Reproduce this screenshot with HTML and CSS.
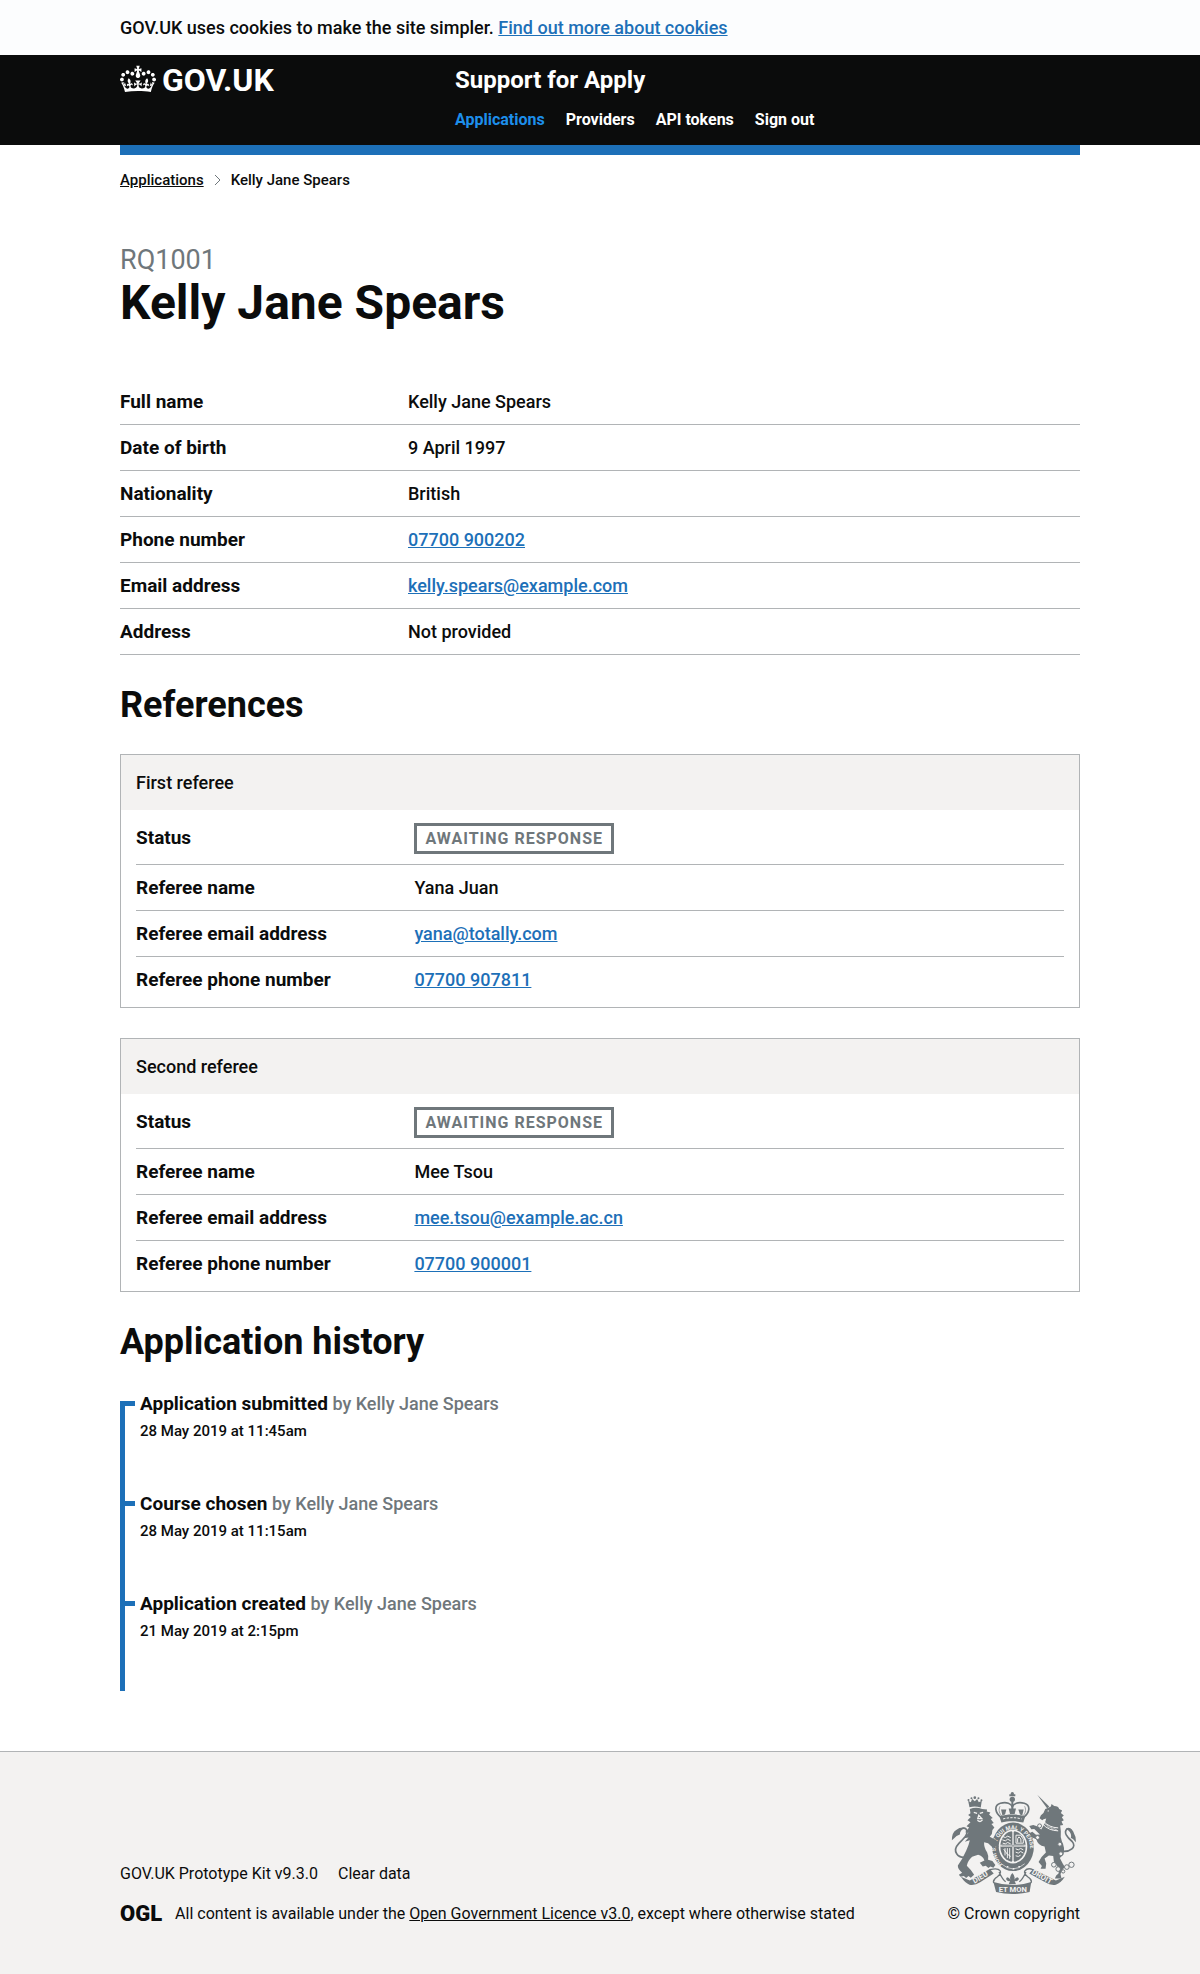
FILE: index.html
```html
<!DOCTYPE html>
<html lang="en">
<head>
<meta charset="utf-8">
<title>Kelly Jane Spears</title>
<meta name="viewport" content="width=device-width, initial-scale=1">
<link rel="stylesheet" href="styles.css">
</head>
<body>
<div class="cookie-banner"><p class="container">GOV.UK uses cookies to make the site simpler. <a class="link" href="#">Find out more about cookies</a></p></div>
<header class="header">
  <div class="container header-inner">
    <a class="logo" href="#">
      <svg class="crown" viewBox="0 0 132 97" aria-hidden="true"><path fill="currentColor" d="M25 30.2c3.5 1.5 7.7-.2 9.1-3.7 1.5-3.6-.2-7.8-3.9-9.2-3.6-1.4-7.6.3-9.1 3.9-1.4 3.5.3 7.5 3.9 9zM9 39.5c3.6 1.5 7.8-.2 9.2-3.7 1.5-3.6-.2-7.8-3.9-9.1-3.6-1.5-7.6.2-9.1 3.8-1.4 3.5.3 7.5 3.8 9zM4.4 57.2c3.5 1.5 7.7-.2 9.1-3.8 1.5-3.6-.2-7.7-3.9-9.1-3.5-1.5-7.6.3-9.1 3.8-1.4 3.5.3 7.6 3.9 9.1zm38.3-21.4c3.5 1.5 7.7-.2 9.1-3.8 1.5-3.6-.2-7.7-3.9-9.1-3.6-1.5-7.6.3-9.1 3.8-1.3 3.6.4 7.7 3.9 9.1zm64.4-5.6c-3.6 1.5-7.8-.2-9.1-3.7-1.5-3.6.2-7.8 3.8-9.2 3.6-1.4 7.7.3 9.2 3.9 1.3 3.5-.4 7.5-3.9 9zm15.9 9.3c-3.6 1.5-7.7-.2-9.1-3.7-1.5-3.6.2-7.8 3.7-9.1 3.6-1.5 7.7.2 9.2 3.8 1.5 3.5-.3 7.5-3.8 9zm4.7 17.7c-3.6 1.5-7.8-.2-9.2-3.8-1.5-3.6.2-7.7 3.9-9.1 3.6-1.5 7.7.3 9.2 3.8 1.3 3.5-.4 7.6-3.9 9.1zM89.3 35.8c-3.6 1.5-7.8-.2-9.2-3.8-1.4-3.6.2-7.7 3.9-9.1 3.6-1.5 7.7.3 9.2 3.8 1.4 3.6-.3 7.7-3.9 9.1zM69.7 17.7l8.9 4.7V9.3l-8.9 2.8c-.2-.3-.5-.6-.9-.9L72.4 0H59.6l3.5 11.2c-.3.3-.6.5-.9.9l-8.8-2.8v13.1l8.8-4.7c.3.3.6.7.9.9l-5 15.4v.1c-.2.8-.4 1.6-.4 2.4 0 4.1 3.1 7.5 7 8.1h.2c.3 0 .7.1 1 .1.4 0 .7 0 1-.1h.2c4-.6 7.1-4.1 7.1-8.1 0-.8-.1-1.7-.4-2.4V34l-5.1-15.4c.4-.2.7-.6 1-.9zM66 92.8c16.9 0 32.8 1.1 47.1 3.2 4-16.9 8.9-26.7 14-33.5l-9.6-3.4c1 4.9 1.1 7.2 0 10.2-1.5-1.4-3-4.3-4.2-8.7L108.6 76c2.8-2 5-3.2 7.5-3.3-4.4 9.4-10 11.9-13.6 11.2-4.3-.8-6.3-4.6-5.6-7.9 1-4.7 5.7-5.9 8-.5 4.3-8.7-3-11.4-7.6-8.8 7.1-7.2 7.9-13.5 2.1-21.1-8 6.1-8.1 12.3-4.5 20.8-4.7-5.4-12.1-2.5-9.5 6.2 3.4-5.2 7.9-2 7.2 3.1-.6 4.3-6.4 7.8-13.5 7.2-10.3-.9-10.9-8-11.2-13.8 2.5-.5 7.1 1.8 11 7.3L80.2 60c-4.1 4.4-8 5.3-12.3 5.4 1.4-4.4 8-11.6 8-11.6H55.5s6.4 7.2 7.9 11.6c-4.2-.1-8-1-12.3-5.4l1.4 16.4c3.9-5.5 8.5-7.7 10.9-7.3-.3 5.8-.9 12.8-11.1 13.8-7.2.6-12.9-2.9-13.5-7.2-.7-5 3.8-8.3 7.1-3.1 2.7-8.7-4.6-11.6-9.4-6.2 3.7-8.5 3.6-14.7-4.6-20.8-5.8 7.6-5 13.9 2.2 21.1-4.7-2.6-11.9.1-7.7 8.8 2.3-5.5 7.1-4.2 8.1.5.7 3.3-1.3 7.1-5.7 7.9-3.5.7-9-1.8-13.5-11.2 2.5.1 4.7 1.3 7.5 3.3l-4.7-15.4c-1.2 4.4-2.7 7.2-4.3 8.7-1.1-3-.9-5.3 0-10.2l-9.5 3.4c5 6.9 9.9 16.7 14 33.5 14.8-2.1 30.8-3.2 47.7-3.2z"/></svg>
      <span>GOV.UK</span>
    </a>
    <div class="header-content">
      <a class="service" href="#">Support for Apply</a>
      <nav><ul class="nav">
        <li><a class="current" href="#">Applications</a></li>
        <li><a href="#">Providers</a></li>
        <li><a href="#">API tokens</a></li>
        <li><a href="#">Sign out</a></li>
      </ul></nav>
    </div>
  </div>
</header>
<div class="container">
  <nav aria-label="Breadcrumb"><ol class="breadcrumbs">
    <li><a href="#">Applications</a></li>
    <li><svg class="chevron" viewBox="0 0 7 12" aria-hidden="true"><path d="M1 1l5 5-5 5" fill="none" stroke="currentColor"/></svg>Kelly Jane Spears</li>
  </ol></nav>
  <main class="main">
    <p class="caption">RQ1001</p>
    <h1>Kelly Jane Spears</h1>
    <dl class="summary">
      <div><dt>Full name</dt><dd>Kelly Jane Spears</dd></div>
      <div><dt>Date of birth</dt><dd>9 April 1997</dd></div>
      <div><dt>Nationality</dt><dd>British</dd></div>
      <div><dt>Phone number</dt><dd><a class="link" href="#">07700 900202</a></dd></div>
      <div><dt>Email address</dt><dd><a class="link" href="#">kelly.spears@example.com</a></dd></div>
      <div><dt>Address</dt><dd>Not provided</dd></div>
    </dl>
    <h2>References</h2>
    <section class="card">
      <h3>First referee</h3>
      <dl class="summary">
        <div><dt>Status</dt><dd><strong class="tag">Awaiting response</strong></dd></div>
        <div><dt>Referee name</dt><dd>Yana Juan</dd></div>
        <div><dt>Referee email address</dt><dd><a class="link" href="#">yana@totally.com</a></dd></div>
        <div><dt>Referee phone number</dt><dd><a class="link" href="#">07700 907811</a></dd></div>
      </dl>
    </section>
    <section class="card">
      <h3>Second referee</h3>
      <dl class="summary">
        <div><dt>Status</dt><dd><strong class="tag">Awaiting response</strong></dd></div>
        <div><dt>Referee name</dt><dd>Mee Tsou</dd></div>
        <div><dt>Referee email address</dt><dd><a class="link" href="#">mee.tsou@example.ac.cn</a></dd></div>
        <div><dt>Referee phone number</dt><dd><a class="link" href="#">07700 900001</a></dd></div>
      </dl>
    </section>
    <h2>Application history</h2>
    <ol class="timeline">
      <li><p><b>Application submitted</b> <span>by Kelly Jane Spears</span></p><time>28 May 2019 at 11:45am</time></li>
      <li><p><b>Course chosen</b> <span>by Kelly Jane Spears</span></p><time>28 May 2019 at 11:15am</time></li>
      <li><p><b>Application created</b> <span>by Kelly Jane Spears</span></p><time>21 May 2019 at 2:15pm</time></li>
    </ol>
  </main>
</div>
<footer class="footer">
  <div class="container footer-inner">
    <div>
      <ul class="footer-links"><li>GOV.UK Prototype Kit v9.3.0</li><li><a href="#">Clear data</a></li></ul>
      <p class="licence"><span class="ogl">OGL</span><span>All content is available under the <a href="#">Open Government Licence v3.0</a>, except where otherwise stated</span></p>
    </div>
    <a class="copyright" href="#">
      <svg class="crest" viewBox="95 155 375 307" aria-hidden="true">
        <defs>
          <path id="garter" d="M249 373A52 59 0 1 1 313 373"/>
        </defs>
        <!-- royal crown -->
        <g fill="none" stroke="currentColor" stroke-width="5">
          <path d="M246 232C226 217 223 195 243 189C262 184 276 190 279 200C282 190 296 184 315 189C335 195 332 217 312 232"/>
          <path d="M279 177V210M270 165H288" stroke-width="6"/>
          <path d="M242 198C236 210 240 221 251 231M316 198C322 210 318 221 307 231" stroke-width="2"/>
        </g>
        <g fill="currentColor">
          <circle cx="279" cy="160" r="5"/><circle cx="279" cy="177" r="8"/>
          <path d="M240 228C265 221 293 221 318 228L312 247C292 242 266 242 246 247ZM249 225L245 208H261L257 223ZM272 221L268 205H290L286 221ZM302 223L297 208H313L309 225Z"/>
        </g>
        <path d="M251 236C270 231 288 231 307 236" fill="none" stroke="#f3f2f1" stroke-width="3" stroke-dasharray="7 4"/>
        <!-- garter and quartered shield -->
        <ellipse cx="281" cy="320" rx="63" ry="73" fill="currentColor"/>
        <ellipse cx="281" cy="319" rx="43" ry="51" fill="#f3f2f1"/>
        <ellipse cx="281" cy="319" rx="38" ry="46" fill="currentColor"/>
        <path d="M281 272V366M243 317H319" stroke="#f3f2f1" stroke-width="6"/>
        <path d="M281 275V363M246 317H316" stroke="currentColor" stroke-width="2"/>
        <g fill="none" stroke="#f3f2f1" stroke-width="3">
          <path d="M250 289l8 3 7-4 9 4M249 299l9 3 7-5 9 5M250 309l8 2 7-4 9 4M253 327q10 18 21 22M257 324v22M264 324v30M271 324v32M289 326l8 3 7-4 8 4M289 336l8 3 7-5 8 5M289 347l8 2 7-4"/>
          <path d="M290 285h14l8 12v12h-22zM295 307q-2-14 4-17 8 4 6 17"/>
        </g>
        <text class="motto" fill="#f3f2f1"><textPath href="#garter">HONI SOIT QUI MAL Y PENSE</textPath></text>
        <path d="M246 371Q281 402 316 371" fill="none" stroke="#f3f2f1" stroke-width="2"/>
        <path d="M262 380h5M280 386h5M297 380h5" stroke="#f3f2f1" stroke-width="5"/>
        <!-- lion -->
        <g fill="currentColor">
          <path d="M150 201L146 181l8 5 4-10 8 7 7-7 5 10 9-5-3 21q-17-6-34-1Z"/>
          <circle cx="147" cy="179" r="3"/><circle cx="156" cy="174" r="3"/><circle cx="166" cy="172" r="4"/><circle cx="177" cy="174" r="3"/><circle cx="186" cy="180" r="3"/>
          <path d="M151 206Q170 199 188 206L203 208L202 214L213 217L209 223L220 233L214 236L223 248L216 251L225 262L219 269Q220 280 211 290L231 300L239 310L233 313L239 320L228 319L229 326L219 321L206 309L194 306Q193 322 203 336Q209 349 206 359L219 363L228 375L222 383L213 379L207 384L199 377L190 379L181 368L195 361Q190 347 176 344L158 350Q144 363 142 377L154 390L164 404L154 413L147 408L140 414L133 408L123 410L118 404L128 398Q114 386 115 376Q129 357 140 332Q148 315 151 300L136 305L147 292L133 294L147 278L137 276L149 262L141 258L153 246L144 240L154 230L146 224L153 219Z"/>
        </g>
        <path d="M145 350C112 358 98 331 117 311C130 297 150 281 140 267C132 259 119 268 112 280" fill="none" stroke="currentColor" stroke-width="5"/>
        <path d="M97 300Q97 276 110 269Q121 260 136 262Q121 271 121 283Q110 287 104 294Z" fill="currentColor"/>
        <path d="M163 216l10 3M181 219l10-3M178 225l-3 10h12ZM174 240q8 8 15-1" fill="none" stroke="#f3f2f1" stroke-width="4"/>
        <!-- unicorn -->
        <g fill="currentColor">
          <path d="M354 163L390 199L384 205Z"/>
          <path d="M384 204L395 199L397 191L405 197Q418 197 420 206L429 211L425 218L434 226L428 231L434 240L427 244L432 254L423 256L425 273Q423 291 428 303Q438 321 433 343L422 354L431 371L437 381L430 389L424 402L427 415H407L411 406L418 400L420 386L404 364L402 348L389 346L376 355L381 370L379 386H364L368 378L358 366L367 351L380 337L376 319Q356 316 351 297L337 291L330 279L339 275L350 284L362 283L345 266L336 267L330 257L342 254L353 258L366 268L377 248L381 235L373 237L369 240L361 234L365 225Q375 218 378 206Z"/>
        </g>
        <path d="M426 333C453 337 474 320 459 304C443 291 433 277 443 267Q449 262 457 271" fill="none" stroke="currentColor" stroke-width="5"/>
        <path d="M440 265Q460 260 465 281Q471 290 470 306Q462 296 455 293Q460 278 440 265Z" fill="currentColor"/>
        <path d="M374 244Q390 262 417 263M371 252Q387 271 417 272" fill="none" stroke="#f3f2f1" stroke-width="3"/>
        <path d="M376 250l8 5 3 6 9 0 3 6 8-1 8 5" fill="none" stroke="#f3f2f1" stroke-width="2"/>
        <circle cx="387" cy="212" r="2" fill="#f3f2f1"/>
        <g fill="#f3f2f1" stroke="currentColor" stroke-width="3">
          <circle cx="361" cy="257" r="6"/><circle cx="355" cy="292" r="6"/><circle cx="422" cy="312" r="6"/><circle cx="425" cy="341" r="6"/><circle cx="404" cy="374" r="7"/><circle cx="417" cy="387" r="7"/><circle cx="443" cy="381" r="7"/><circle cx="457" cy="374" r="8"/><circle cx="432" cy="394" r="5"/>
        </g>
        <!-- scroll -->
        <g fill="currentColor">
          <path d="M124 410L151 421L211 387L223 400L182 427Q166 437 150 434Q137 429 124 410Z"/>
          <path d="M437 410L410 421L342 387L330 400L378 427Q394 437 410 434Q425 429 437 410Z"/>
          <path d="M222 426Q279 444 336 426L331 456Q279 468 230 456Z"/>
        </g>
        <path d="M211 389Q235 382 242 392Q247 400 234 410Q219 419 223 429M342 389Q325 382 317 392Q312 400 325 410Q340 419 335 429M239 396Q250 420 259 425M320 396Q309 420 300 425" fill="none" stroke="currentColor" stroke-width="4"/>
        <path d="M279 399Q268 411 274 419Q263 405 260 417Q262 425 272 423L268 433H290L286 423Q297 425 299 417Q295 405 284 419Q290 411 279 399Z" fill="currentColor"/>
        <g class="scroll-text" fill="#f3f2f1">
          <text x="238" y="457">ET MON</text>
          <text transform="translate(165 431) rotate(-31)">DIEU</text>
          <text transform="translate(336 400) rotate(30)">DROIT</text>
        </g>
      </svg>
      <span>© Crown copyright</span>
    </a>
  </div>
</footer>
</body>
</html>
```

FILE: styles.css
```css
* { box-sizing: border-box; }
body { margin: 0; background: #fff; color: #0b0c0c; font: 500 18px/25px Roboto, Arial, sans-serif; }
h1, h2, h3, p, ul, ol, dl, dd { margin: 0; padding: 0; }
ul, ol { list-style: none; }
.container { max-width: 960px; margin: 0 auto; }
.link { color: #1d70b8; }
.cookie-banner { padding: 15px 0; background: #fcfdfe; }
.header { display: flow-root; background: #0b0c0c; color: #fff; }
.header a { color: inherit; text-decoration: none; font-weight: 700; }
.header-inner { display: flex; border-bottom: 10px solid #1d70b8; margin-bottom: -10px; padding: 10px 0 15px; }
.logo { display: flex; width: 335px; gap: 6px; font-size: 32px; line-height: 30px; }
.crown { width: 36px; height: 28px; }
.service { display: block; font-size: 24px; line-height: 30px; }
.nav { display: flex; gap: 21px; font-size: 16px; line-height: 20px; margin-top: 15px; }
.header .current { color: #1d8feb; }
.breadcrumbs { display: flex; gap: 10px; padding-top: 25px; font-size: 15px; line-height: 20px; }
.breadcrumbs a { color: inherit; }
.chevron { width: 7px; height: 12px; margin-right: 10px; color: #6f777b; vertical-align: -1px; }
.main { padding: 55px 0 60px; }
.caption { color: #6f777b; font-size: 27px; font-weight: 400; line-height: 30px; }
h1 { font-size: 48px; line-height: 56px; margin-bottom: 48px; }
h2 { font-size: 36px; line-height: 40px; margin: 30px 0 29px; }
.summary > div { display: grid; grid-template-columns: 3fr 7fr; padding: 10px 0; border-bottom: 1px solid #b1b4b6; }
dt, b { font-size: 19px; font-weight: 700; }
.card { border: 1px solid #b1b4b6; margin-bottom: 30px; }
.card h3 { background: #f3f2f1; padding: 15px; font-size: 18px; font-weight: 500; line-height: 25px; }
.card .summary { padding: 5px 15px; }
.card .summary > div:last-child { border: 0; }
.tag { display: block; width: max-content; margin-top: -2px; padding: 3px 8px 2px; border: 3px solid #6f777b; color: #6f777b; font-size: 16px; line-height: 20px; letter-spacing: 1px; text-transform: uppercase; }
.timeline { position: relative; }
.timeline::before { content: ""; position: absolute; left: 0; top: 10px; bottom: 0; width: 5px; background: #1d70b8; }
.timeline li { position: relative; padding: 0 0 50px 20px; }
.timeline li::before { content: ""; position: absolute; left: 0; top: 10px; width: 15px; height: 5px; background: #1d70b8; }
.timeline span { color: #6f777b; }
.timeline time { display: block; margin-top: 5px; font-size: 15px; line-height: 20px; }
.footer { border-top: 1px solid #b1b4b6; background: #f3f2f1; padding: 40px 0 50px; font-size: 16px; font-weight: 400; line-height: 20px; }
.footer a { color: inherit; }
.footer-inner { display: flex; justify-content: space-between; align-items: flex-end; }
.footer-links { display: flex; gap: 20px; margin-bottom: 20px; }
.footer-links a, .footer .copyright { text-decoration: none; }
.licence { display: flex; gap: 13px; }
.ogl { font-size: 22px; font-weight: 900; }
.copyright { display: flex; flex-direction: column; align-items: center; gap: 10px; }
.crest { width: 125px; height: 102px; color: #6f777b; }
.motto { font: 700 17px Roboto, sans-serif; }
.scroll-text { font: 700 23px Roboto, sans-serif; }
```
